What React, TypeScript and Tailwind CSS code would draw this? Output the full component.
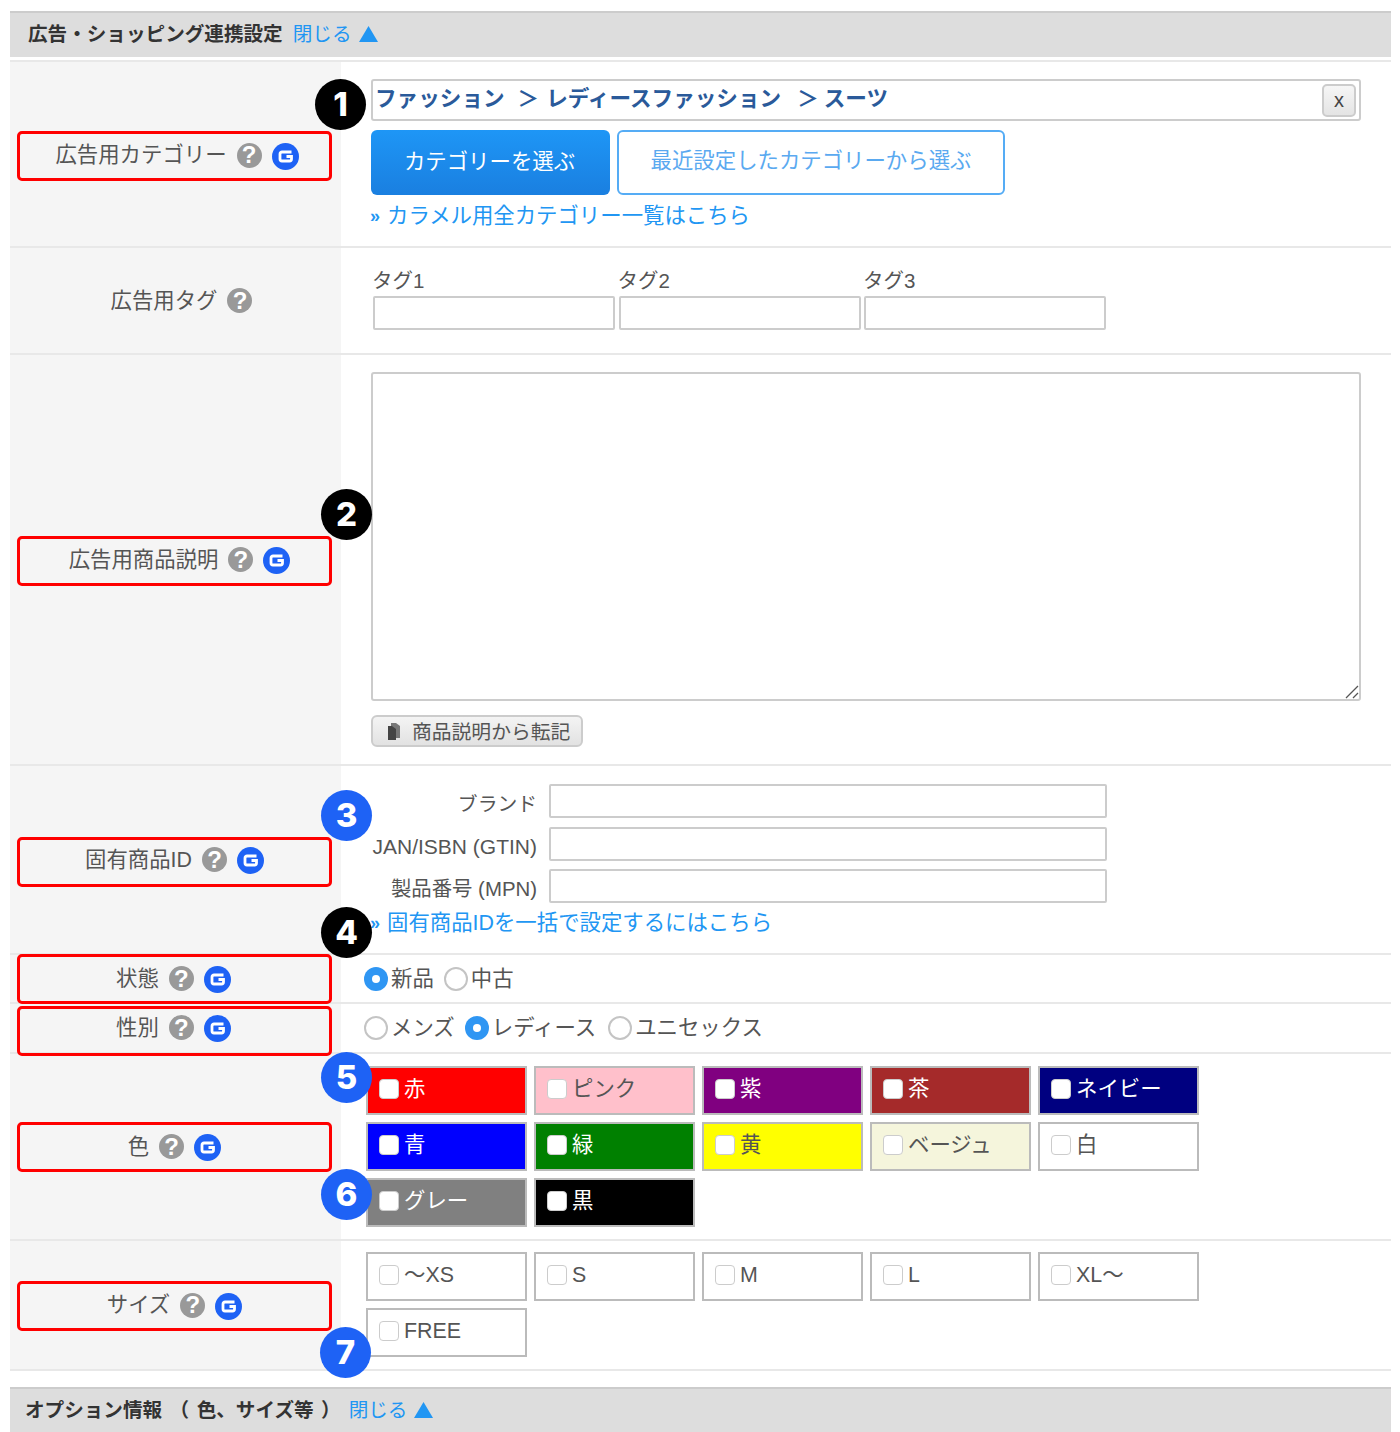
import React from "react";

function Help() {
  return (
    <span className="flex h-[25px] w-[25px] shrink-0 items-center justify-center rounded-full bg-[#999999] font-['Liberation_Sans',sans-serif] text-[24px] font-bold leading-none text-white">
      ?
    </span>
  );
}

function GIcon() {
  return (
    <svg width="27" height="27" viewBox="0 0 27 27" className="mt-[2px] shrink-0">
      <circle cx="13.5" cy="13.5" r="13.5" fill="#1e62f5" />
      <path d="M19.500 9H10a2 2 0 0 0-2 2v5a2 2 0 0 0 2 2h7.500a2 2 0 0 0 2-2v-2.500h-5" fill="none" stroke="#ffffff" strokeWidth="2.800" />
    </svg>
  );
}

function Label({ text, g = true, boxed = true, offset = "" }: { text: string; g?: boolean; boxed?: boolean; offset?: string }) {
  return (
    <div className="flex w-[331px] shrink-0 items-center bg-[#f5f5f5]">
      <div
        className={`relative z-10 ml-[7px] flex h-[50px] w-[315px] shrink-0 items-center justify-center gap-[10px] rounded-[5px] border-[3px] ${boxed ? "border-[#ff0000]" : "border-transparent"} ${offset}`}
      >
        <span className="text-[#555555]">{text}</span>
        <Help />
        {g && <GIcon />}
      </div>
    </div>
  );
}

function Row({ h, label, g, boxed, offset, className = "", children }: { h: string; label: string; g?: boolean; boxed?: boolean; offset?: string; className?: string; children: React.ReactNode }) {
  return (
    <div className={`flex border-b-2 border-[#e8e8e8] ${h}`}>
      <Label text={label} g={g} boxed={boxed} offset={offset} />
      <div className={`min-w-0 flex-1 bg-white ${className}`}>{children}</div>
    </div>
  );
}

function SectionHeader({ title, pad, titleClass = "" }: { title: string; pad: string; titleClass?: string }) {
  return (
    <div className={`flex h-[46px] items-center gap-[10px] border-t-2 border-[#cccccc] bg-[#dddddd] pb-[2px] ${pad}`}>
      <span className={`whitespace-pre text-[19.6px] font-bold text-[#333333] [word-spacing:2px] ${titleClass}`}>{title}</span>
      <span className="flex items-center gap-[7px] text-[19.6px] text-[#2196f3]">
        閉じる
        <svg width="19" height="16" viewBox="0 0 19 16"><polygon points="9.500,0 19,16 0,16" fill="#2196f3" /></svg>
      </span>
    </div>
  );
}

function MoreLink({ text, className = "" }: { text: string; className?: string }) {
  return (
    <div className={`-ml-px flex items-center gap-[6px] whitespace-nowrap text-[#2196f3] ${className}`}>
      <span className="w-[11px] text-[18px] font-bold leading-none">»</span>
      <span>{text}</span>
    </div>
  );
}

function Radio({ on, text, className = "" }: { on?: boolean; text: string; className?: string }) {
  return (
    <div className={`flex items-center gap-[3px] ${className}`}>
      <span className={`flex h-[24px] w-[24px] items-center justify-center rounded-full ${on ? "bg-[#2f96f3]" : "border-2 border-[#c4c4c4] bg-white"}`}>
        {on && <span className="h-[8px] w-[8px] rounded-full bg-white" />}
      </span>
      <span className="text-[#555555]">{text}</span>
    </div>
  );
}

function Swatch({ text, bg, fg }: { text: string; bg: string; fg: string }) {
  return (
    <div className={`flex h-[49px] items-center gap-[5px] border-2 border-[#bbbbbb] pb-[3px] pl-[11px] ${bg} ${fg}`}>
      <span className="h-[20px] w-[20px] shrink-0 rounded-[4px] border-[1.5px] border-[#cccccc] bg-white" />
      <span className="whitespace-nowrap">{text}</span>
    </div>
  );
}

function Field({ label, size }: { label: string; size: string }) {
  return (
    <div className="flex h-[42.500px] items-start gap-[12px]">
      <span className={`mt-[5px] w-[166px] whitespace-nowrap text-right text-[#555555] ${size}`}>{label}</span>
      <input className="h-[34px] w-[558px] rounded-[2px] border-2 border-[#cccccc] bg-white" />
    </div>
  );
}

function TagField({ label }: { label: string }) {
  return (
    <div className="flex w-[242px] flex-col">
      <span className="-ml-px h-[31px] text-[20.500px] leading-[32px] text-[#555555]">{label}</span>
      <input className="h-[34px] w-full rounded-[2px] border-2 border-[#cccccc] bg-white" />
    </div>
  );
}

function Badge({ n, dark, className }: { n: string; dark?: boolean; className: string }) {
  return (
    <div className={`absolute z-20 flex h-[51px] w-[51px] items-center justify-center rounded-full font-['Inter',sans-serif] text-[33px] font-extrabold leading-none text-white ${dark ? "bg-black" : "bg-[#1e62f5]"} ${className}`}>
      {n}
    </div>
  );
}

export default function App() {
  return (
    <div className="relative h-[1432px] overflow-hidden bg-white pl-[10px] pr-[9px] pt-[11px] font-['Liberation_Sans','Noto_Sans_CJK_JP',sans-serif] text-[21.400px] leading-[30px]">
      <SectionHeader title="広告・ショッピング連携設定" pad="pl-[18px]" />
      <div className="mt-[3px] border-t-2 border-[#e8e8e8]">
        <Row h="h-[186px]" label="広告用カテゴリー" offset="mt-[3px] pl-[5px] pb-[1px]" className="pl-[30px] pt-[17px]">
          <div className="flex h-[42px] w-[990px] items-center justify-between rounded-[3px] border-2 border-[#cccccc] pl-[2px] pr-[3px]">
            <span className="flex whitespace-nowrap pb-[3px] text-[21.600px] font-bold text-[#2a5a9a]">
              <span>ファッション</span>
              <span className="ml-[13px]">＞</span>
              <span className="ml-[7px]">レディースファッション</span>
              <span className="ml-[16px]">＞</span>
              <span className="ml-[5px]">スーツ</span>
            </span>
            <span className="flex h-[33px] w-[34px] items-center justify-center rounded-[5px] border-2 border-[#cccccc] bg-linear-to-b from-[#f6f6f6] to-[#e4e4e4] text-[20px] text-[#444444]">x</span>
          </div>
          <div className="mt-[9px] flex gap-[7px]">
            <div className="flex h-[65px] w-[239px] items-center justify-center rounded-[6px] bg-linear-to-b from-[#1e96f6] to-[#1a7fe0] pb-[2px] pr-[2px] text-white">カテゴリーを選ぶ</div>
            <div className="flex h-[65px] w-[388px] items-center justify-center rounded-[6px] border-2 border-[#55acf5] bg-white pb-[3px] text-[#5aa9f0]">最近設定したカテゴリーから選ぶ</div>
          </div>
          <MoreLink text="カラメル用全カテゴリー一覧はこちら" className="mt-[6px]" />
        </Row>
        <Row h="h-[107px]" label="広告用タグ" g={false} boxed={false} offset="pl-[14px]" className="pl-[32px] pt-[17px]">
          <div className="flex gap-[3.500px]">
            <TagField label="タグ1" />
            <TagField label="タグ2" />
            <TagField label="タグ3" />
          </div>
        </Row>
        <Row h="h-[411px]" label="広告用商品説明" offset="mt-[3px] pl-[10px] pb-[3px]" className="pl-[30px] pt-[17px]">
          <div className="relative h-[329px] w-[990px]">
            <textarea className="block h-full w-full resize-none rounded-[3px] border-2 border-[#cccccc] bg-white" />
            <svg width="14" height="14" viewBox="0 0 14 14" className="absolute bottom-[2px] right-[2px]">
              <path d="M1 13L13 1M8 13L13 8" stroke="#555555" strokeWidth="1.300" fill="none" />
            </svg>
          </div>
          <div className="mt-[14px] flex h-[32px] w-[212px] items-center gap-[11px] rounded-[6px] border-2 border-[#cccccc] bg-linear-to-b from-[#f4f4f4] to-[#e2e2e2] pl-[14px] text-[19.800px] text-[#555555]">
            <svg width="14" height="17" viewBox="0 0 14 17" className="shrink-0">
              <path d="M4 0h5l4 3v12H4z" fill="#777777" />
              <path d="M1 3h4l4 3v11H1z" fill="#444444" />
            </svg>
            <span className="whitespace-nowrap pt-[2px]">商品説明から転記</span>
          </div>
        </Row>
        <Row h="h-[189px]" label="固有商品ID" offset="mt-[4px] pb-[4px]" className="pl-[30px] pt-[18px]">
          <Field label="ブランド" size="text-[19.800px]" />
          <Field label="JAN/ISBN (GTIN)" size="text-[21px]" />
          <Field label="製品番号 (MPN)" size="text-[20.400px]" />
          <MoreLink text="固有商品IDを一括で設定するにはこちら" className="-mt-[4px]" />
        </Row>
        <Row h="h-[49px]" label="状態" offset="mt-[1px] pb-[1px] pr-[2px]" className="flex items-center gap-[10px] pl-[23px]">
          <Radio on text="新品" />
          <Radio text="中古" />
        </Row>
        <Row h="h-[50px]" label="性別" offset="mt-[5px] pb-[6px] pr-[2px]" className="flex items-center gap-[10px] pl-[23px]">
          <Radio text="メンズ" />
          <Radio on text="レディース" />
          <Radio text="ユニセックス" className="ml-[2px]" />
        </Row>
        <Row h="h-[187px]" label="色" offset="mt-[1px] pb-[1px]" className="pl-[25px] pt-[12px]">
          <div className="grid grid-cols-[repeat(5,161px)] gap-[7px]">
            <Swatch text="赤" bg="bg-[#ff0000]" fg="text-white" />
            <Swatch text="ピンク" bg="bg-[#ffc0cb]" fg="text-[#555555]" />
            <Swatch text="紫" bg="bg-[#800080]" fg="text-white" />
            <Swatch text="茶" bg="bg-[#a52a2a]" fg="text-white" />
            <Swatch text="ネイビー" bg="bg-[#000080]" fg="text-white" />
            <Swatch text="青" bg="bg-[#0000ff]" fg="text-white" />
            <Swatch text="緑" bg="bg-[#008000]" fg="text-white" />
            <Swatch text="黄" bg="bg-[#ffff00]" fg="text-[#555555]" />
            <Swatch text="ベージュ" bg="bg-[#f5f5dc]" fg="text-[#555555]" />
            <Swatch text="白" bg="bg-white" fg="text-[#555555]" />
            <Swatch text="グレー" bg="bg-[#808080]" fg="text-white" />
            <Swatch text="黒" bg="bg-black" fg="text-white" />
          </div>
        </Row>
        <Row h="h-[130px]" label="サイズ" offset="mt-[1px] pb-[1px]" className="pl-[25px] pt-[11px]">
          <div className="grid grid-cols-[repeat(5,161px)] gap-[7px]">
            <Swatch text="～XS" bg="bg-white" fg="text-[#555555]" />
            <Swatch text="S" bg="bg-white" fg="text-[#555555]" />
            <Swatch text="M" bg="bg-white" fg="text-[#555555]" />
            <Swatch text="L" bg="bg-white" fg="text-[#555555]" />
            <Swatch text="XL～" bg="bg-white" fg="text-[#555555]" />
            <Swatch text="FREE" bg="bg-white" fg="text-[#555555]" />
          </div>
        </Row>
      </div>
      <div className="mt-[16px]">
        <SectionHeader title="オプション情報 （ 色、サイズ等 ）" pad="pl-[15px]" titleClass="-mr-[2px]" />
      </div>
      <Badge n="1" dark className="left-[315px] top-[79px]" />
      <Badge n="2" dark className="left-[321px] top-[489px]" />
      <Badge n="3" className="left-[321px] top-[790px]" />
      <Badge n="4" dark className="left-[321px] top-[907px]" />
      <Badge n="5" className="left-[321px] top-[1052px]" />
      <Badge n="6" className="left-[321px] top-[1169px]" />
      <Badge n="7" className="left-[320px] top-[1327px]" />
    </div>
  );
}
